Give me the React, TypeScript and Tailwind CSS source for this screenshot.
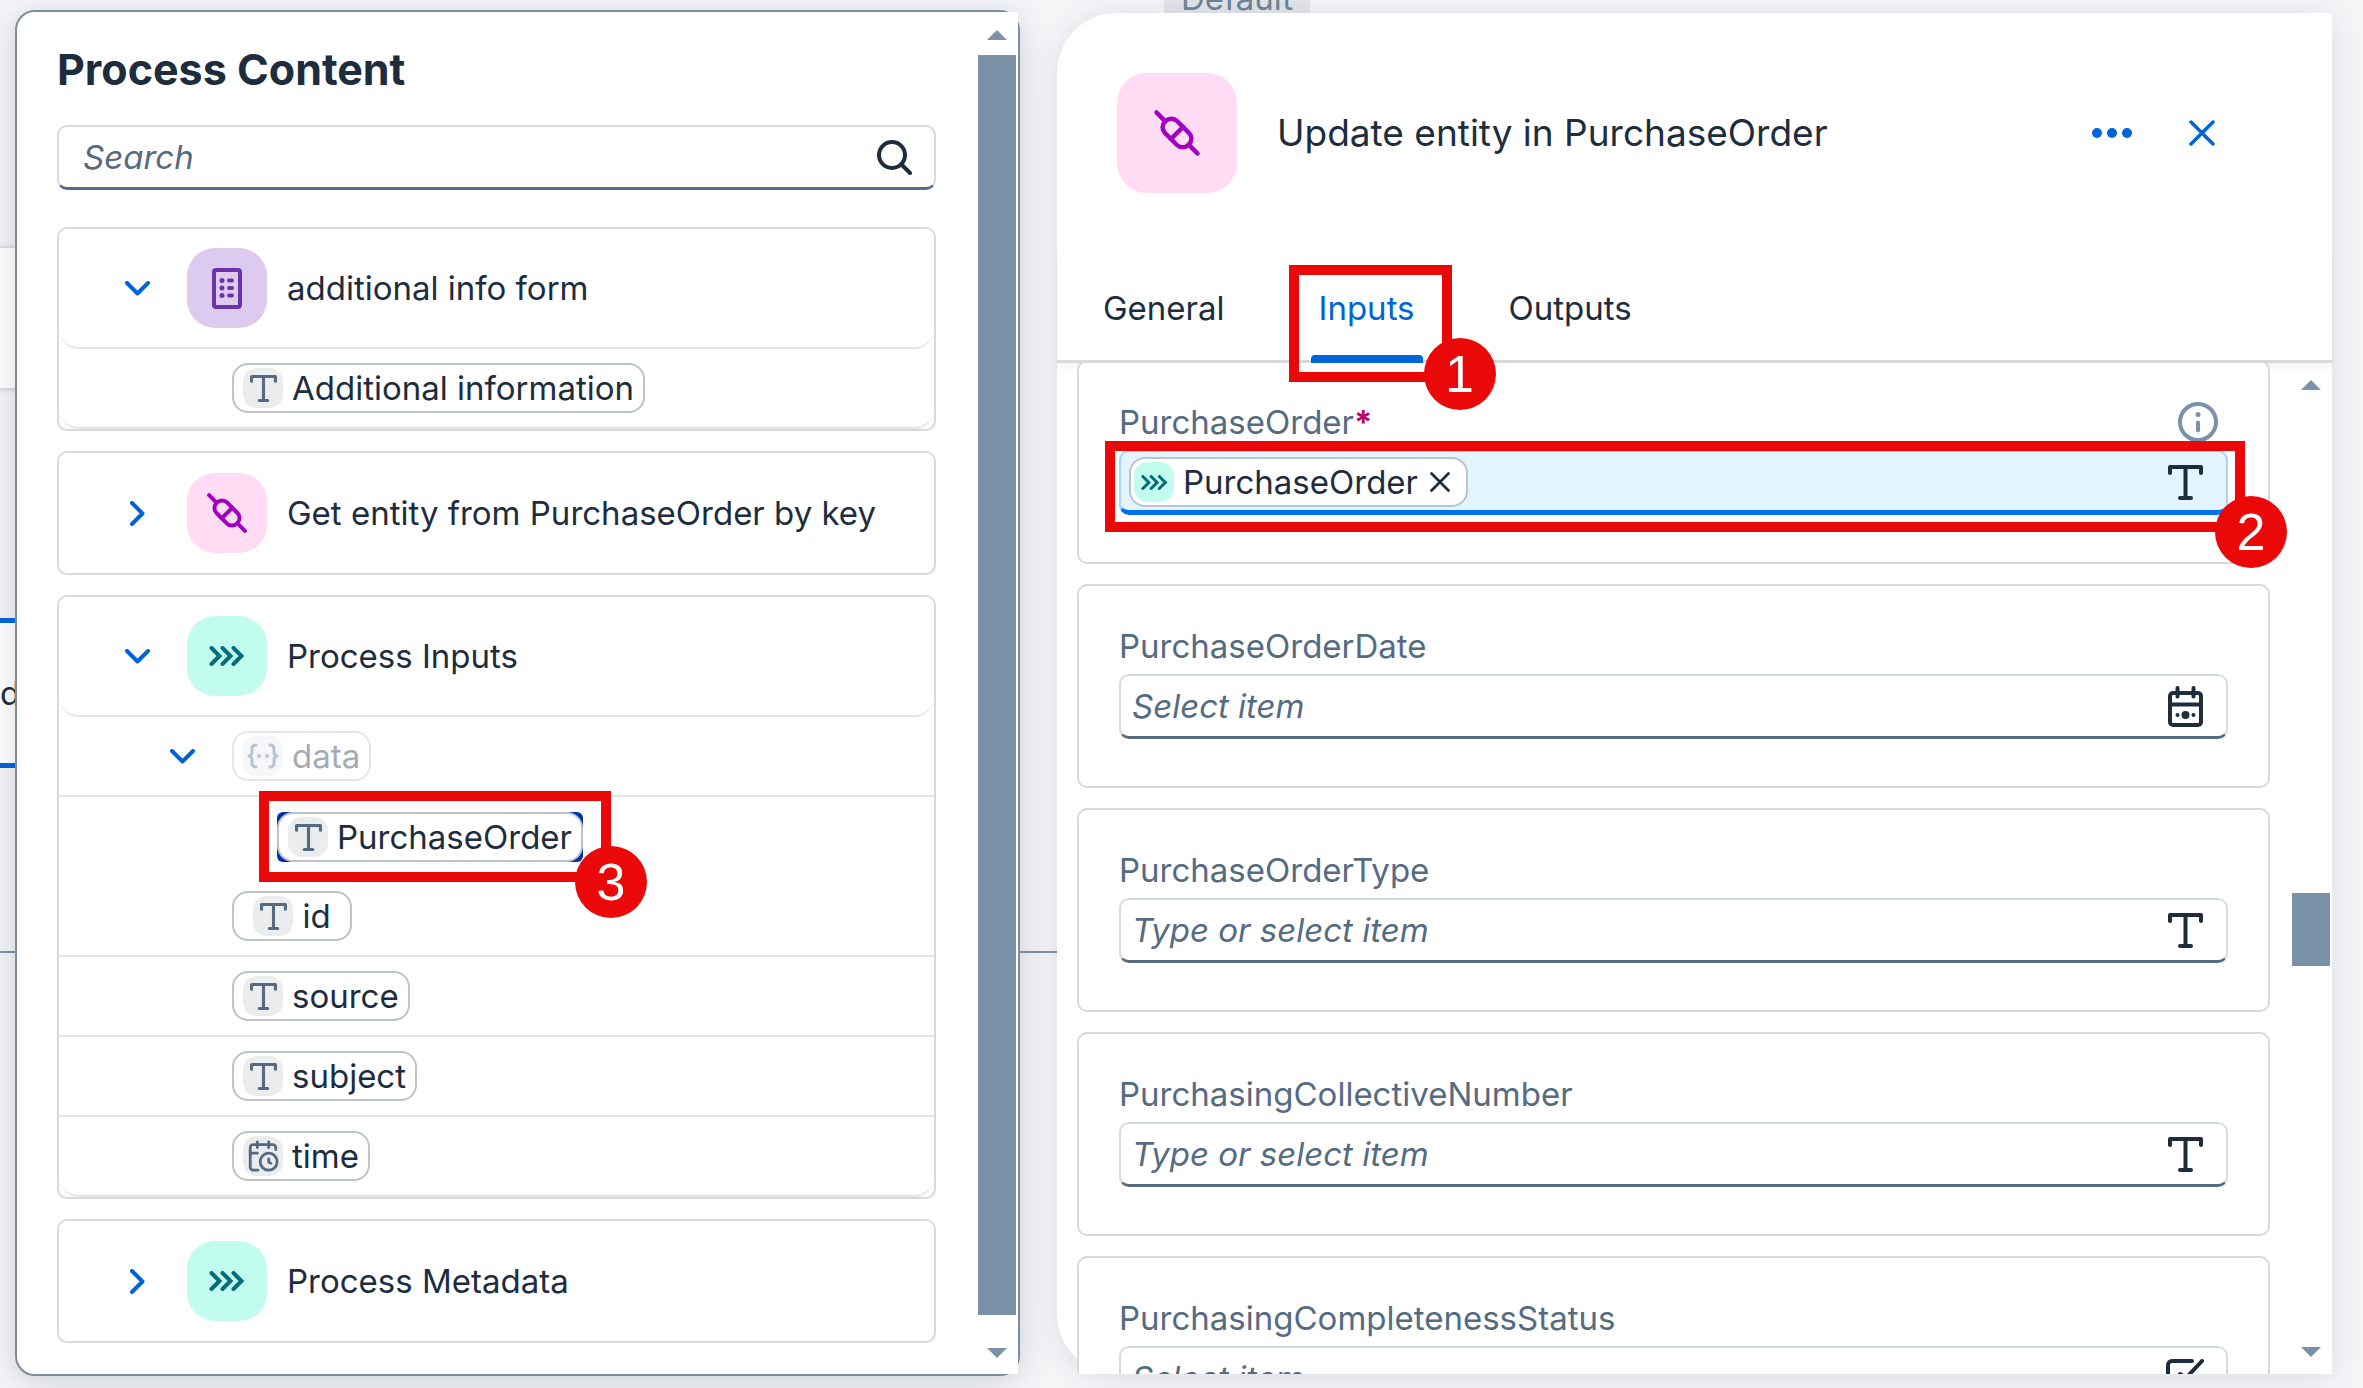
import React from "react";
import { CalendarClock } from "lucide-react";

type IconProps = { className?: string };

const stroke = {
  fill: "none",
  stroke: "currentColor",
  strokeLinecap: "round" as const,
  strokeLinejoin: "round" as const,
};

function TextTypeIcon({ className }: IconProps) {
  return (
    <svg viewBox="0 0 35 35" className={className} {...stroke} strokeWidth={4} aria-hidden="true">
      <path d="M2 8V2H33V8M17.5 2V33M12 33H23" />
    </svg>
  );
}

function ConnectorIcon({ className }: IconProps) {
  return (
    <svg viewBox="0 0 48 48" className={className} {...stroke} strokeWidth={4.5} aria-hidden="true">
      <g transform="rotate(45 24 24)">
        <rect x="7.5" y="15.5" width="33" height="17" rx="8" />
        <path d="M-5 24H7.5M40.5 24H53M24 15.5V32.5" />
      </g>
    </svg>
  );
}

function FormIcon({ className }: IconProps) {
  return (
    <svg viewBox="0 0 30 41" className={className} {...stroke} strokeWidth={4} aria-hidden="true">
      <rect x="2" y="2" width="26" height="37" rx="2" />
      <path d="M17 12.5H20M17 20H20M17 27.5H20" />
      <g fill="currentColor" stroke="none">
        <circle cx="10" cy="12.5" r="2.5" />
        <circle cx="10" cy="20" r="2.5" />
        <circle cx="10" cy="27.5" r="2.5" />
      </g>
    </svg>
  );
}

function TripleChevronIcon({ className }: IconProps) {
  return (
    <svg viewBox="0 0 36 20" className={className} {...stroke} strokeWidth={4} strokeLinejoin="miter" aria-hidden="true">
      <path d="M2.5 2L10.500 10L2.500 18M13.500 2L21.500 10L13.500 18M24.500 2L32.500 10L24.500 18" />
    </svg>
  );
}

function ObjectIcon({ className }: IconProps) {
  return (
    <svg viewBox="0 0 32 28" className={className} {...stroke} strokeWidth={3} aria-hidden="true">
      <path d="M9 3C5 3 5 5 5 8C5 12 5 13 2 14C5 15 5 16 5 20C5 23 5 25 9 25M23 3C27 3 27 5 27 8C27 12 27 13 30 14C27 15 27 16 27 20C27 23 27 25 23 25" />
      <g fill="currentColor" stroke="none">
        <circle cx="12" cy="14" r="2" />
        <circle cx="20" cy="14" r="2" />
      </g>
    </svg>
  );
}

function CalendarIcon({ className }: IconProps) {
  return (
    <svg viewBox="0 0 35 41" className={className} {...stroke} strokeWidth={4} aria-hidden="true">
      <rect x="2" y="7" width="31" height="32" rx="3" />
      <path d="M9.500 2V10.500M25.500 2V10.500M2 18.500H33" />
      <g fill="currentColor" stroke="none">
        <circle cx="9.500" cy="29" r="2" />
        <circle cx="17.500" cy="29" r="4" />
        <circle cx="25.500" cy="29" r="2" />
      </g>
    </svg>
  );
}

function CheckBoxIcon({ className }: IconProps) {
  return (
    <svg viewBox="0 0 38 38" className={className} {...stroke} strokeWidth={4} aria-hidden="true">
      <path d="M26 2H6A4 4 0 0 0 2 6V32A4 4 0 0 0 6 36H32A4 4 0 0 0 36 32V20M36 2L20 19L14 15" />
    </svg>
  );
}

function SearchIcon({ className }: IconProps) {
  return (
    <svg viewBox="0 0 35 35" className={className} {...stroke} strokeWidth={4} aria-hidden="true">
      <circle cx="15" cy="15" r="13" />
      <path d="M24.500 24.500L33 33" />
    </svg>
  );
}

function InfoIcon({ className }: IconProps) {
  return (
    <svg viewBox="0 0 40 40" className={className} {...stroke} strokeWidth={4} aria-hidden="true">
      <circle cx="20" cy="20" r="18" />
      <path d="M20 20.500V28.500" />
      <circle cx="20" cy="12.500" r="2.500" fill="currentColor" stroke="none" />
    </svg>
  );
}

function CrossIcon({ className }: IconProps) {
  return (
    <svg viewBox="0 0 26 26" className={className} {...stroke} strokeWidth={3.5} aria-hidden="true">
      <path d="M2 2L24 24M24 2L2 24" />
    </svg>
  );
}

function ChevronIcon({ open }: { open: boolean }) {
  return open ? (
    <svg viewBox="0 0 25 15" className="h-[15px] w-[25px]" {...stroke} strokeWidth={4} aria-hidden="true">
      <path d="M2 2L12.500 12.500L23 2" />
    </svg>
  ) : (
    <svg viewBox="0 0 15 25" className="h-[25px] w-[15px]" {...stroke} strokeWidth={4} aria-hidden="true">
      <path d="M2 2L12.500 12.500L2 23" />
    </svg>
  );
}

function Toggle({ open, label }: { open: boolean; label: string }) {
  return (
    <button
      type="button"
      aria-expanded={open}
      aria-label={label}
      className="mr-5 flex h-[60px] w-[60px] flex-none items-center justify-center text-[#0064d9]"
    >
      <ChevronIcon open={open} />
    </button>
  );
}

/* Numbered call-out: a red frame with a round step number near its lower right corner. */
function Callout({ step, frame, badge }: { step: number; frame: string; badge: string }) {
  return (
    <div className={`pointer-events-none absolute z-20 border-[10px] border-[#ea0808] ${frame}`}>
      <span
        className={`absolute flex h-[72px] w-[72px] items-center justify-center rounded-full bg-[#ea0808] font-['Liberation_Sans',Arial,sans-serif] text-[52px] leading-none text-white ${badge}`}
      >
        {step}
      </span>
    </div>
  );
}

const tileStyles = {
  form: "bg-[#dccbef] text-[#6c32a9]",
  connector: "bg-[#ffdcf3] text-[#a100c2]",
  process: "bg-[#c2fcee] text-[#046c7a]",
};

function Tile({ kind }: { kind: keyof typeof tileStyles }) {
  return (
    <span className={`mr-5 flex h-20 w-20 flex-none items-center justify-center rounded-[28px] ${tileStyles[kind]}`}>
      {kind === "form" && <FormIcon className="h-[41px] w-[30px]" />}
      {kind === "connector" && <ConnectorIcon className="h-[42px] w-[42px]" />}
      {kind === "process" && <TripleChevronIcon className="h-5 w-9" />}
    </span>
  );
}

function Group({
  title,
  kind,
  open = false,
  children,
}: {
  title: string;
  kind: keyof typeof tileStyles;
  open?: boolean;
  children?: React.ReactNode;
}) {
  return (
    <section className="rounded-[10px] border-2 border-[#d9d9d9] bg-white">
      <div
        className={`flex h-[120px] items-center pl-12 ${open ? "rounded-b-[20px] border-b-2 border-[#e5e5e5]" : ""}`}
      >
        <Toggle open={open} label={title} />
        <Tile kind={kind} />
        <h3>{title}</h3>
      </div>
      {children}
    </section>
  );
}

function Chip({
  label,
  icon = "text",
  faded = false,
  selected = false,
}: {
  label: string;
  icon?: "text" | "object" | "time";
  faded?: boolean;
  selected?: boolean;
}) {
  return (
    <span className={`flex rounded-md ${selected ? "bg-[#0032a5]" : ""} ${faded ? "opacity-40" : ""}`}>
      <button
        type="button"
        className="flex h-[50px] min-w-[120px] items-center justify-center gap-[9px] rounded-2xl border-2 border-[#bcc3ce] bg-white px-[9px] whitespace-nowrap"
      >
        <span className="flex h-10 w-10 items-center justify-center rounded-[14px] bg-[#eaecee] text-[#556b82]">
          {icon === "text" && <TextTypeIcon className="h-[27px] w-[27px]" />}
          {icon === "object" && <ObjectIcon className="h-7 w-8" />}
          {icon === "time" && <CalendarClock className="h-[34px] w-[34px]" strokeWidth={2} />}
        </span>
        {label}
      </button>
    </span>
  );
}

function Row({
  indent,
  border = "line",
  children,
}: {
  indent: "toggle" | "item" | "child";
  border?: "line" | "round" | "none";
  children: React.ReactNode;
}) {
  const indents = { toggle: "pl-[93px]", item: "pl-[173px]", child: "pl-[218px]" };
  const borders = {
    line: "border-b-2 border-[#e5e5e5]",
    round: "border-b-2 border-[#e5e5e5] rounded-b-[20px]",
    none: "",
  };
  return <div className={`flex h-20 items-center ${indents[indent]} ${borders[border]}`}>{children}</div>;
}

function ScrollArrow({ down = false }: { down?: boolean }) {
  return (
    <svg viewBox="0 0 20 10" className="h-[10px] w-5" fill="#7b91a8" aria-hidden="true">
      <path d={down ? "M0 0H20L10 10Z" : "M0 10H20L10 0Z"} />
    </svg>
  );
}

const fieldIcons = { text: TextTypeIcon, date: CalendarIcon, check: CheckBoxIcon };
const fieldIconSizes = { text: "h-[35px] w-[35px]", date: "h-[41px] w-[35px]", check: "h-[38px] w-[38px]" };

function Field({ name, hint, icon }: { name: string; hint: string; icon: keyof typeof fieldIcons }) {
  const Icon = fieldIcons[icon];
  return (
    <section className="flex-none rounded-[10px] border-2 border-[#d9d9d9] bg-white px-10 pt-10 pb-[47px]">
      <label htmlFor={name} className="block h-10 leading-10 text-[#556b82]">
        {name}
      </label>
      <div className="mt-2 flex h-[65px] items-center rounded-[10px] border-2 border-b-[3px] border-[#d5dbe3] border-b-[#556b82] bg-white">
        <input
          id={name}
          placeholder={hint}
          className="h-full min-w-0 flex-1 bg-transparent pl-[11px] outline-none placeholder:text-[#556b82] placeholder:italic"
        />
        <button
          type="button"
          aria-label={`Choose ${name}`}
          className="flex h-full w-[82px] flex-none items-center justify-center"
        >
          <Icon className={fieldIconSizes[icon]} />
        </button>
      </div>
    </section>
  );
}

const fields: { name: string; hint: string; icon: keyof typeof fieldIcons }[] = [
  { name: "PurchaseOrderDate", hint: "Select item", icon: "date" },
  { name: "PurchaseOrderType", hint: "Type or select item", icon: "text" },
  { name: "PurchasingCollectiveNumber", hint: "Type or select item", icon: "text" },
  { name: "PurchasingCompletenessStatus", hint: "Select item", icon: "check" },
];

/* Parts of the process diagram that show between and beside the panels. */
function Canvas() {
  return (
    <div className="absolute inset-0 overflow-hidden">
      <div className="absolute top-[248px] -left-10 h-[140px] w-20 bg-white shadow-[0_0_6px_rgba(34,54,73,0.3)]" />
      <div className="absolute top-[951px] left-0 h-0.5 w-1/2 bg-[#7b91a8]" />
      <div className="absolute top-[618px] -left-10 flex h-[150px] w-20 items-center border-y-[5px] border-[#0064d9] bg-white pl-10">
        d
      </div>
      <div className="absolute -top-[27px] left-[1164px] flex h-[50px] w-[146px] items-center justify-center bg-[#e2e5ea] text-[#6f839a]">
        Default
      </div>
    </div>
  );
}

function ContentPanel() {
  return (
    <aside className="relative mt-[10px] mb-3 flex min-w-0 flex-[1001] rounded-[20px] border-2 border-[#7f8c99] bg-white shadow-[0_6px_32px_rgba(34,54,73,0.18)]">
      <div className="flex min-w-0 flex-1 flex-col px-10 pt-[27px]">
        <h2 className="text-[43px] leading-[60px] font-bold">Process Content</h2>
        <div className="mt-[26px] flex h-[65px] flex-none items-center rounded-[10px] border-2 border-b-[3px] border-[#d5dbe3] border-b-[#556b82]">
          <input
            type="search"
            aria-label="Search process content"
            placeholder="Search"
            className="h-full min-w-0 flex-1 bg-transparent pl-6 outline-none placeholder:text-[#556b82] placeholder:italic"
          />
          <button type="button" aria-label="Search" className="flex h-full w-20 flex-none items-center justify-center">
            <SearchIcon className="h-[35px] w-[35px]" />
          </button>
        </div>

        <div className="mt-[37px] flex flex-col gap-5">
          <Group title="additional info form" kind="form" open>
            <Row indent="item" border="round">
              <Chip label="Additional information" />
            </Row>
          </Group>
          <Group title="Get entity from PurchaseOrder by key" kind="connector" />
          <Group title="Process Inputs" kind="process" open>
            <Row indent="toggle">
              <Toggle open label="data" />
              <Chip label="data" icon="object" faded />
            </Row>
            <Row indent="child" border="none">
              <div className="relative">
                <Chip label="PurchaseOrder" selected />
                <Callout
                  step={3}
                  frame="-top-[21px] -right-7 -bottom-5 -left-[18px]"
                  badge="-right-[46px] -bottom-[46px]"
                />
              </div>
            </Row>
            <Row indent="item">
              <Chip label="id" />
            </Row>
            <Row indent="item">
              <Chip label="source" />
            </Row>
            <Row indent="item">
              <Chip label="subject" />
            </Row>
            <Row indent="item" border="round">
              <Chip label="time" icon="time" />
            </Row>
          </Group>
          <Group title="Process Metadata" kind="process" />
        </div>
      </div>
      <div className="flex w-[42px] flex-none flex-col items-center bg-white pt-[18px] pb-4">
        <ScrollArrow />
        <div className="mt-[15px] mb-[33px] w-[38px] flex-1 bg-[#7b91a8]" />
        <ScrollArrow down />
      </div>
    </aside>
  );
}

function DetailPanel() {
  return (
    <main className="relative mt-[13px] mb-[14px] flex min-w-0 flex-[1275] flex-col rounded-l-[60px] bg-white shadow-[0_4px_32px_rgba(34,54,73,0.12)]">
      <header className="flex h-[240px] flex-none items-start pt-[60px] pr-[100px] pl-[60px]">
        <span className={`flex h-[120px] w-[120px] flex-none items-center justify-center rounded-[30px] ${tileStyles.connector}`}>
          <ConnectorIcon className="h-12 w-12" />
        </span>
        <h1 className="ml-10 flex-1 truncate text-[37px] leading-[120px]">Update entity in PurchaseOrder</h1>
        <div className="flex h-[120px] items-center gap-[30px] text-[#0064d9]">
          <button type="button" aria-label="More actions" className="flex h-[60px] w-[60px] items-center justify-center gap-[5px]">
            <span className="h-[10px] w-[10px] rounded-full bg-current" />
            <span className="h-[10px] w-[10px] rounded-full bg-current" />
            <span className="h-[10px] w-[10px] rounded-full bg-current" />
          </button>
          <button type="button" aria-label="Close" className="flex h-[60px] w-[60px] items-center justify-center">
            <CrossIcon className="h-[26px] w-[26px]" />
          </button>
        </div>
      </header>

      <nav
        role="tablist"
        className="flex h-[110px] flex-none gap-[78px] border-b-[3px] border-[#d9d9d9] pt-[3px] pl-[38px] shadow-[0_4px_6px_rgba(34,54,73,0.06)]"
      >
        <button type="button" role="tab" aria-selected="false" className="px-2">
          General
        </button>
        <div className="relative flex">
          <button type="button" role="tab" aria-selected="true" className="px-2 text-[#0064d9]">
            Inputs
          </button>
          <span className="absolute inset-x-0 -bottom-[3px] h-2 rounded-t bg-[#0064d9]" />
          <Callout
            step={1}
            frame="top-[9px] -right-[29px] -bottom-[22px] -left-[22px]"
            badge="-right-[54px] -bottom-[38px]"
          />
        </div>
        <button type="button" role="tab" aria-selected="false" className="px-2">
          Outputs
        </button>
      </nav>

      <div className="flex min-h-0 flex-1 overflow-hidden">
        <div className="-mt-[3px] flex min-w-0 flex-1 flex-col gap-5 pl-5">
          <section className="flex-none rounded-[10px] border-2 border-[#d9d9d9] bg-white px-10 pt-10 pb-[47px]">
            <div className="flex h-10 items-center pr-[10px] leading-10">
              <label htmlFor="PurchaseOrder" className="flex-1 text-[#556b82]">
                PurchaseOrder<span className="font-bold text-[#ba066c]">*</span>
              </label>
              <button type="button" aria-label="About PurchaseOrder" className="text-[#7b91a8]">
                <InfoIcon className="h-10 w-10" />
              </button>
            </div>
            <div className="relative mt-2">
              <div className="flex h-[65px] items-center rounded-[10px] border-2 border-b-[5px] border-[#a6d0ff] border-b-[#0070f2] bg-[#e1f4ff] pt-0.5">
                <span className="ml-2 flex h-[50px] items-center rounded-2xl border-2 border-[#bcc3ce] bg-white pr-4 pl-[3px] whitespace-nowrap">
                  <span className="mr-[9px] flex h-10 w-10 items-center justify-center rounded-[14px] bg-[#c2fcee] text-[#046c7a]">
                    <TripleChevronIcon className="h-[15px] w-[27px]" />
                  </span>
                  PurchaseOrder
                  <button type="button" aria-label="Remove PurchaseOrder" className="ml-3">
                    <CrossIcon className="h-5 w-5" />
                  </button>
                </span>
                <input id="PurchaseOrder" className="h-full min-w-0 flex-1 bg-transparent pl-2 outline-none" />
                <button
                  type="button"
                  aria-label="Choose PurchaseOrder"
                  className="flex h-full w-[82px] flex-none items-center justify-center"
                >
                  <TextTypeIcon className="h-[35px] w-[35px]" />
                </button>
              </div>
              <Callout
                step={2}
                frame="-top-[9px] -right-[17px] -bottom-[17px] -left-[14px]"
                badge="-right-[52px] -bottom-[46px]"
              />
            </div>
          </section>
          {fields.map((field) => (
            <Field key={field.name} {...field} />
          ))}
        </div>
        <div className="ml-5 flex w-[42px] flex-none flex-col items-center pt-[17px] pb-[17px]">
          <ScrollArrow />
          <div className="flex w-full flex-1 flex-col items-center">
            <div className="flex-[503]" />
            <div className="h-[73px] w-[38px] bg-[#7b91a8]" />
            <div className="flex-[381]" />
          </div>
          <ScrollArrow down />
        </div>
      </div>
    </main>
  );
}

export default function App() {
  return (
    <div className="relative flex h-screen overflow-hidden bg-[#f4f5f7] pr-[31px] pl-[15px] font-[Inter,sans-serif] text-[33px] leading-10 text-[#1d2d3e]">
      <Canvas />
      <ContentPanel />
      <div className="w-[37px] flex-none" />
      <DetailPanel />
    </div>
  );
}
